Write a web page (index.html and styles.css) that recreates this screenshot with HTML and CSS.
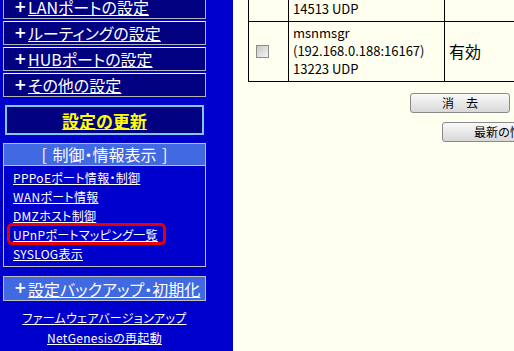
FILE: index.html
```html
<!DOCTYPE html>
<html lang="ja">
	<head>
		<meta charset="UTF-8">
		<title>UPnPポートマッピング一覧</title>
		<link rel="stylesheet" href="styles.css">
	</head>
	<body>
		<div class="page">
			<!-- left menu -->
			<nav class="side">
				<div class="menu-box first"><span class="plus">+</span><a href="#">LANポートの設定</a></div>
				<div class="menu-box"><span class="plus">+</span><a href="#">ルーティングの設定</a></div>
				<div class="menu-box"><span class="plus">+</span><a href="#">HUBポートの設定</a></div>
				<div class="menu-box"><span class="plus">+</span><a href="#">その他の設定</a></div>
				<div class="update-box"><a href="#">設定の更新</a></div>
				<div class="info-box">
					<div class="info-head">[ 制御・情報表示 ]</div>
					<ul class="info-list">
						<li><a href="#">PPPoEポート情報・制御</a></li>
						<li><a href="#">WANポート情報</a></li>
						<li><a href="#">DMZホスト制御</a></li>
						<li><a class="marked" href="#">UPnPポートマッピング一覧</a></li>
						<li><a href="#">SYSLOG表示</a></li>
					</ul>
				</div>
				<div class="menu-box backup"><span class="plus">+</span><a href="#">設定バックアップ・初期化</a></div>
				<div class="side-foot">
					<a href="#">ファームウェアバージョンアップ</a>
					<a href="#">NetGenesisの再起動</a>
				</div>
			</nav>
			<!-- mapping table -->
			<main class="content">
				<table class="map-table">
					<colgroup>
						<col class="c-check">
						<col class="c-name">
						<col class="c-state">
					</colgroup>
					<tr class="row-top">
						<td></td>
						<td class="name">14513 UDP</td>
						<td></td>
					</tr>
					<tr>
						<td class="check"><input type="checkbox"></td>
						<td class="name">msnmsgr<br>(192.168.0.188:16167)<br>13223 UDP</td>
						<td class="state">有効</td>
					</tr>
				</table>
				<div class="actions clear"><button class="btn">消　去</button></div>
				<div class="actions refresh"><button class="btn wide">最新の情報に更新</button></div>
			</main>
		</div>
	</body>
</html>
```

FILE: styles.css
```css
* {
	box-sizing: border-box;
}

body {
	margin: 0;
	font-family: "Noto Sans CJK JP", "DejaVu Sans", sans-serif;
	font-feature-settings: "palt";
	overflow: hidden;
}

.page {
	display: flex;
	height: 351px;
}

.side {
	flex: none;
	width: 233px;
	padding-left: 3px;
	background: #0000cc;
}

.side a {
	color: white;
}

.menu-box {
	display: flex;
	align-items: center;
	width: 203px;
	height: 24px;
	margin-bottom: 2px;
	padding-left: 10px;
	background: #000080;
	border: 1px solid #b4b4b4;
	border-top-color: white;
}

.menu-box.first {
	margin-top: -5px;
}

.plus {
	width: 14px;
	color: white;
	font-family: "DejaVu Sans", sans-serif;
	font-size: 15px;
	font-weight: bold;
	line-height: 1;
}

.menu-box a {
	font-size: 16px;
	line-height: 22px;
}

.update-box {
	display: flex;
	align-items: center;
	justify-content: center;
	width: 199px;
	height: 30px;
	margin: 8px 0 0 2px;
	background: #000080;
	border: 2px solid #80c8f0;
}

.update-box a {
	color: #ffff00;
	font-size: 17px;
	font-weight: bold;
}

.info-box {
	width: 203px;
	margin-top: 8px;
	border: 1px solid #c0c0c0;
}

.info-head {
	height: 22px;
	background: #4169e1;
	border-bottom: 1px solid #c0c0c0;
	color: white;
	font-size: 16px;
	line-height: 21px;
	text-align: center;
	word-spacing: 2px;
}

.info-list {
	margin: 0;
	padding: 2px 0 3px 9px;
	list-style: none;
	font-size: 12px;
	line-height: 19px;
	letter-spacing: 0.3px;
}

.marked {
	position: relative;
}

.marked::after {
	content: "";
	position: absolute;
	left: -6px;
	right: -8px;
	top: -3px;
	bottom: -2px;
	border: 3px solid #e80000;
	border-radius: 5px;
}

.menu-box.backup {
	height: 25px;
	margin-top: 9px;
	background: #4169e1;
	border-color: #c0c0c0;
}

.side-foot {
	display: flex;
	flex-direction: column;
	align-items: center;
	width: 203px;
	margin-top: 7px;
	font-size: 12px;
	line-height: 20px;
	letter-spacing: 0.3px;
}

.content {
	flex: 1;
	min-width: 0;
	overflow: hidden;
	padding-left: 15px;
	background: #fffff0;
	font-size: 13px;
}

.map-table {
	table-layout: fixed;
	width: 316px;
	margin-top: -1px;
	border-collapse: collapse;
}

.c-check {
	width: 40px;
}

.c-name {
	width: 156px;
}

.c-state {
	width: 120px;
}

.map-table td {
	padding: 2px 4px 3px;
	border: 1px solid black;
	line-height: 18px;
	vertical-align: middle;
}

.row-top td {
	height: 22px;
	padding: 0 4px 3px;
}

.check input {
	appearance: none;
	display: block;
	width: 13px;
	height: 13px;
	margin: 0 0 0 3px;
	background: linear-gradient(135deg, #c8c8c8, #f4f4f4);
	border: 1px solid #8c8c8c;
}

.state {
	font-size: 16px;
}

.actions {
	display: flex;
}

.actions.clear {
	margin: 11px 0 0 162px;
}

.actions.refresh {
	margin: 9px 0 0 194px;
}

.btn {
	flex: none;
	width: 100px;
	height: 20px;
	padding: 0;
	background: linear-gradient(#fafafa, #e8e8e8 50%, #d8d8d8);
	border: 1px solid #8a8a8a;
	border-radius: 3px;
	color: black;
	font-family: inherit;
	font-size: 12px;
	line-height: 18px;
	white-space: nowrap;
}

.btn.wide {
	width: 160px;
}
```
